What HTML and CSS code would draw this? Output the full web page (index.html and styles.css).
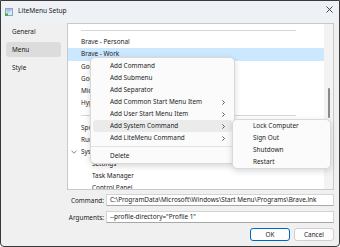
FILE: index.html
```html
<!DOCTYPE html>
<html lang="en">
<head>
    <meta charset="UTF-8">
    <title>LiteMenu Setup</title>
    <link rel="stylesheet" href="styles.css">
</head>
<body>
    <div class="window">
        <div class="titlebar">
            <svg class="app-icon" width="8" height="8" viewBox="0 0 8 8">
                <rect x="0.5" y="0.5" width="7" height="7" fill="#dfe8f3" stroke="#8aa6c8"/>
                <rect x="1.5" y="1.5" width="5" height="1" fill="#6f93c2"/>
                <rect x="1.5" y="3.5" width="3" height="1" fill="#9fb6d4"/>
                <rect x="0" y="5.5" width="3" height="2.5" fill="#3fae49"/>
            </svg>
            <span class="title">LiteMenu Setup</span>
            <svg class="close" width="7" height="7" viewBox="0 0 7 7">
                <path d="M0.5 0.5 L6.5 6.5 M6.5 0.5 L0.5 6.5" stroke="#333" stroke-width="0.9"/>
            </svg>
        </div>

        <div class="content">
            <nav class="sidebar">
                <div class="nav-item">General</div>
                <div class="nav-item active">Menu</div>
                <div class="nav-item">Style</div>
            </nav>

            <div class="main">
                <div class="list">
                    <div class="tree">
                        <div class="row sep"><div class="line"></div></div>
                        <div class="row">Brave - Personal</div>
                        <div class="row selected">Brave - Work</div>
                        <div class="row">Google Chrome</div>
                        <div class="row">Google Drive</div>
                        <div class="row">Microsoft Edge</div>
                        <div class="row">Hyper-V Manager</div>
                        <div class="row sep"><div class="line"></div></div>
                        <div class="row">Spotify</div>
                        <div class="row">Run</div>
                        <div class="row parent">
                            <svg class="expander" width="6" height="4" viewBox="0 0 6 4">
                                <path d="M0.5 0.8 L3 3.2 L5.5 0.8" fill="none" stroke="#666" stroke-width="0.8"/>
                            </svg>
                            System
                        </div>
                        <div class="row child">Settings</div>
                        <div class="row child">Task Manager</div>
                        <div class="row child">Control Panel</div>
                    </div>
                    <div class="scrollbar"><div class="thumb"></div></div>
                </div>

                <div class="field-row">
                    <span class="label">Command:</span>
                    <div class="field">C:\ProgramData\Microsoft\Windows\Start Menu\Programs\Brave.lnk</div>
                </div>
                <div class="field-row">
                    <span class="label">Arguments:</span>
                    <div class="field">--profile-directory="Profile 1"</div>
                </div>

                <div class="buttons">
                    <button class="btn default">OK</button>
                    <button class="btn">Cancel</button>
                </div>
            </div>
        </div>

        <!-- context menu -->
        <div class="menu context">
            <div class="menu-item">Add Command</div>
            <div class="menu-item">Add Submenu</div>
            <div class="menu-item">Add Separator</div>
            <div class="menu-item">Add Common Start Menu Item
                <svg class="arrow" width="3" height="5" viewBox="0 0 3 5"><path d="M0.4 0.4 L2.5 2.5 L0.4 4.6" fill="none" stroke="#333" stroke-width="0.8"/></svg>
            </div>
            <div class="menu-item">Add User Start Menu Item
                <svg class="arrow" width="3" height="5" viewBox="0 0 3 5"><path d="M0.4 0.4 L2.5 2.5 L0.4 4.6" fill="none" stroke="#333" stroke-width="0.8"/></svg>
            </div>
            <div class="menu-item hover">Add System Command
                <svg class="arrow" width="3" height="5" viewBox="0 0 3 5"><path d="M0.4 0.4 L2.5 2.5 L0.4 4.6" fill="none" stroke="#333" stroke-width="0.8"/></svg>
            </div>
            <div class="menu-item">Add LiteMenu Command
                <svg class="arrow" width="3" height="5" viewBox="0 0 3 5"><path d="M0.4 0.4 L2.5 2.5 L0.4 4.6" fill="none" stroke="#333" stroke-width="0.8"/></svg>
            </div>
            <div class="menu-sep"></div>
            <div class="menu-item">Delete</div>
        </div>

        <div class="menu submenu">
            <div class="menu-item">Lock Computer</div>
            <div class="menu-item">Sign Out</div>
            <div class="menu-item">Shutdown</div>
            <div class="menu-item">Restart</div>
        </div>
    </div>
</body>
</html>
```

FILE: styles.css
```css
* {
    box-sizing: border-box;
}
body {
    margin: 0;
    font-family: "Noto Sans", "Open Sans", sans-serif;
    font-size: 6.4px;
    color: #1b1b1b;
}
.window {
    position: relative;
    width: 340px;
    height: 247px;
    border: 1px solid #3a3a3a;
    border-radius: 0 0 4px 4px;
    background: #f0f0f0;
    overflow: hidden;
}
.titlebar {
    height: 22px;
    display: flex;
    align-items: center;
    padding: 0 6px 0 4px;
    background: #eef2f7;
}
.app-icon {
    margin-right: 5px;
    margin-top: -1px;
}
.title {
    flex: 1;
    font-size: 6.6px;
    margin-top: -3px;
}
.close {
    margin-top: -6px;
}
.content {
    display: flex;
    height: 223px;
}
.sidebar {
    width: 60px;
    padding: 1px 0 0 5px;
}
.nav-item {
    height: 15px;
    line-height: 15px;
    margin-bottom: 3px;
    padding-left: 6px;
    border-radius: 3px;
}
.nav-item.active {
    background: #dcdcdc;
}
.main {
    flex: 1;
    margin-left: 6px;
    padding-right: 5px;
    display: flex;
    flex-direction: column;
}
.list {
    height: 167px;
    border: 1px solid #c9c9c9;
    background: #fff;
    display: flex;
}
.tree {
    flex: 1;
    overflow: hidden;
}
.row {
    height: 12.2px;
    line-height: 12.2px;
    padding-left: 13px;
    white-space: nowrap;
    display: flex;
    align-items: center;
}
.row.selected {
    background: #cce8ff;
}
.row.parent {
    padding-left: 3px;
}
.expander {
    margin-right: 4px;
    margin-top: 1px;
}
.row.child {
    padding-left: 24px;
}
.row.sep .line {
    flex: 1;
    height: 1px;
    margin-right: 28px;
    background: #d6d6d6;
}
.scrollbar {
    width: 9px;
    background: #f3f3f3;
    padding-left: 4px;
}
.thumb {
    width: 1.5px;
    height: 30px;
    margin-top: 64px;
    border-radius: 1px;
    background: #8a8a8a;
}
.field-row {
    display: flex;
    align-items: center;
    height: 12px;
    margin-top: 4px;
}
.field-row + .field-row {
    margin-top: 5px;
}
.label {
    width: 37px;
    text-align: right;
    margin-right: 2px;
    white-space: nowrap;
}
.field {
    flex: 1;
    height: 12px;
    line-height: 10px;
    padding-left: 3px;
    background: #fff;
    border: 1px solid #d4d4d4;
    border-bottom-color: #a8a8a8;
    white-space: nowrap;
    overflow: hidden;
}
.buttons {
    display: flex;
    justify-content: flex-end;
    gap: 4px;
    margin-top: 5px;
}
.btn {
    width: 40px;
    height: 13px;
    padding: 0;
    font: inherit;
    color: #1b1b1b;
    background: #fdfdfd;
    border: 1px solid #d0d0d0;
    border-radius: 3px;
}
.btn.default {
    border-color: #0067c0;
}
.menu {
    position: absolute;
    background: #fbfbfb;
    border: 1px solid #d9d9d9;
    border-radius: 5px;
    box-shadow: 0 2px 6px rgba(0, 0, 0, 0.16);
}
.context {
    left: 89px;
    top: 56px;
    width: 145px;
    padding: 2px 2px 1px;
}
.submenu {
    left: 231px;
    top: 118px;
    width: 99px;
    padding: 0 2px;
}
.menu-item {
    height: 12px;
    line-height: 12px;
    padding: 0 7px 0 17px;
    display: flex;
    align-items: center;
    justify-content: space-between;
    border-radius: 3px;
    white-space: nowrap;
}
.submenu .menu-item {
    padding-left: 18px;
}
.menu-item.hover {
    background: #ebebeb;
}
.menu-sep {
    height: 1px;
    margin: 2px -2px 3px;
    background: #e3e3e3;
}
```
